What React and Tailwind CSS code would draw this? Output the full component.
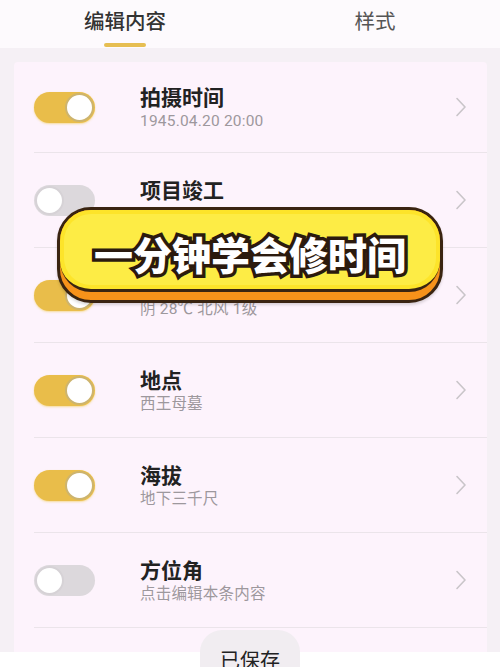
import React from 'react';

const rows = [
    { title: '拍摄时间', sub: '1945.04.20 20:00', on: true, first: true },
    { title: '项目竣工', sub: '2019.06.01', on: false },
    { title: '天气', sub: '阴 28℃ 北风 1级', on: true },
    { title: '地点', sub: '西王母墓', on: true },
    { title: '海拔', sub: '地下三千尺', on: true },
    { title: '方位角', sub: '点击编辑本条内容', on: false },
];

const Toggle = ({ on }) => (
    <div
        className={
            on
                ? 'w-[61px] h-[31px] rounded-full bg-[#e9bd4a] flex items-center justify-end pr-[1px] shadow-[0_1px_2px_rgba(240,200,60,0.5)]'
                : 'w-[61px] h-[31px] rounded-full bg-[#dcd8dc] flex items-center justify-start pl-[1px]'
        }
    >
        <div
            className={
                on
                    ? 'w-[29px] h-[29px] rounded-full bg-white border-[2px] border-[#cdb46e]'
                    : 'w-[29px] h-[29px] rounded-full bg-white border-[2px] border-[#d6d2d6]'
            }
        />
    </div>
);

const Chevron = () => (
    <svg width="12" height="20" viewBox="0 0 12 20" fill="none">
        <path d="M2 1.5 L10 10 L2 18.5" stroke="#c9c5c9" strokeWidth="1.6" strokeLinecap="round" strokeLinejoin="round" />
    </svg>
);

const Row = ({ title, sub, on, first }) => (
    <div
        className={
            first
                ? 'ml-[20px] h-[91px] border-b border-[#ebe4ea] flex items-center pr-[20px]'
                : 'ml-[20px] h-[95px] border-b border-[#ebe4ea] flex items-center pr-[20px]'
        }
    >
        <Toggle on={on} />
        <div className="ml-[45px] flex-1 flex flex-col">
            <span className="text-[21px] leading-[28px] font-bold text-[#222]">{title}</span>
            <span className="text-[15.5px] leading-[22px] text-[#9d989d] font-['Roboto','Noto_Sans_CJK_SC',sans-serif] tracking-[0.2px]">{sub}</span>
        </div>
        <Chevron />
    </div>
);

export default function App() {
    return (
        <div className="relative w-[500px] h-[667px] overflow-hidden bg-[#f5f0f5] font-['Noto_Sans_CJK_SC','Noto_Sans',sans-serif]">
            {/* Tabs */}
            <div className="h-[48px] bg-[#fdfafd] flex">
                <div className="w-1/2 flex flex-col items-center pt-[6px]">
                    <span className="text-[20.5px] leading-[28px] font-medium text-[#333]">编辑内容</span>
                    <div className="mt-[9px] w-[42px] h-[4px] rounded-full bg-[#e6be52]" />
                </div>
                <div className="w-1/2 flex flex-col items-center pt-[6px]">
                    <span className="text-[20.5px] leading-[28px] text-[#555]">样式</span>
                </div>
            </div>

            {/* Card */}
            <div className="mt-[14px] ml-[14px] mr-[13px] bg-[#fdf3fc] rounded-t-[4px]">
                {rows.map((r) => (
                    <Row key={r.title} {...r} />
                ))}
                <div className="h-[40px]" />
            </div>

            {/* Banner overlay */}
            <div className="absolute left-[57px] top-[207px] w-[386px] h-[96px] rounded-[34px] border-[3px] border-[#3a2411] bg-[#f7921a] shadow-[0_2px_3px_rgba(0,0,0,0.15)]">
                <div className="h-[82px] rounded-[31px] border-b-[3px] border-[#3a2411] bg-[#fde42a] p-[4px]">
                    <div className="h-full rounded-[27px] bg-[#fdec45] flex items-center justify-center">
                        <span className="text-[39px] leading-[44px] font-black text-white tracking-[0px] [-webkit-text-stroke:7px_#2b1a0e] [paint-order:stroke_fill] mt-[6px]">
                            一分钟学会修时间
                        </span>
                    </div>
                </div>
            </div>

            {/* Bottom bar */}
            <div className="absolute left-0 right-0 bottom-0 h-[15px] bg-white" />
            <div className="absolute left-[200px] top-[630px] w-[100px] h-[60px] rounded-t-[22px] bg-[#f1edf1] flex justify-center pt-[16px]">
                <span className="text-[20px] leading-[28px] text-[#222]">已保存</span>
            </div>
        </div>
    );
}
